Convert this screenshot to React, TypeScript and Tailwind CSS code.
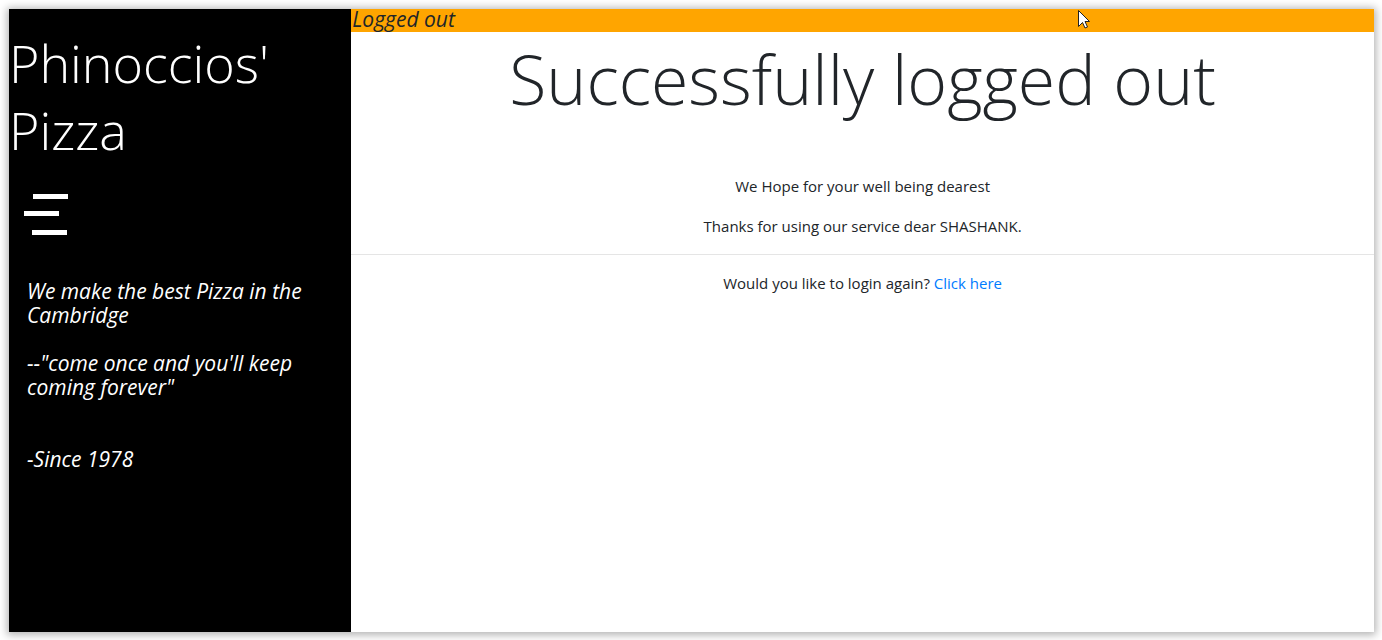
export default function App() {
  return (
    <div className="flex min-h-screen bg-white p-[9px] pr-2 pb-2 font-['Open_Sans','Noto_Sans',sans-serif] text-[#212529]">
      <div className="flex grow shadow-[0_1px_8px_2px_rgba(0,0,0,0.3)]">
        <aside className="w-1/4 shrink-0 box-content border-r border-black bg-black text-white">
          <h1 className="pt-5 pb-1 text-[52px] leading-[67px] font-light">
            Phinoccios' Pizza
          </h1>
          <button type="button" aria-label="Menu" className="mt-6 ml-[15px] block">
            <svg width="45" height="44" viewBox="0 0 45 44" fill="currentColor" aria-hidden="true">
              <rect x="9" y="3" width="35" height="5" />
              <rect x="0" y="20" width="35" height="5" />
              <rect x="8" y="39" width="35" height="5" />
            </svg>
          </button>
          <div className="mt-11 flex flex-col gap-6 px-[18px] text-[21px] leading-6 italic">
            <p>We make the best Pizza in the Cambridge</p>
            <p>--"come once and you'll keep coming forever"</p>
            <p className="mt-6">-Since 1978</p>
          </div>
        </aside>
        <main className="relative grow bg-white text-center">
          <p className="bg-[#ffa500] pb-[3px] pl-px text-left text-[21px] leading-5 italic">Logged out</p>
          <h2 className="pt-1 text-[68px] leading-[86px] font-light">Successfully logged out</h2>
          <div className="mt-13 flex flex-col gap-4 text-[15px] leading-6">
            <p>We Hope for your well being dearest</p>
            <p>Thanks for using our service dear SHASHANK.</p>
            <hr className="border-[#e5e5e5]" />
            <p>
              Would you like to login again?{" "}
              <a href="#login" className="text-[#007bff]">Click here</a>
            </p>
          </div>
          <svg className="absolute top-0 right-[284px]" width="12" height="20" viewBox="0 0 12 20" aria-hidden="true">
            <path d="M.5 1.5v16l4-4 2.5 5.5 2.5-1L7 12.5h4.5z" fill="#fff" stroke="#222" />
          </svg>
        </main>
      </div>
    </div>
  );
}
